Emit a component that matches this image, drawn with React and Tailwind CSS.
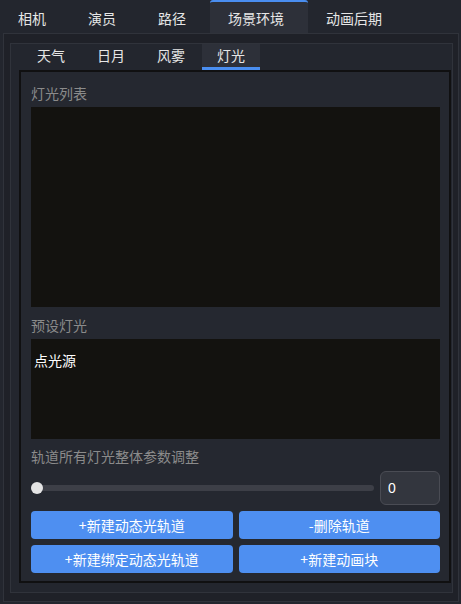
import React, { useState } from "react";

const topTabs = [
  { label: "相机", w: "w-[70px]" },
  { label: "演员", w: "w-[70px]" },
  { label: "路径", w: "w-[70px]" },
  { label: "场景环境", w: "w-[98px]" },
  { label: "动画后期", w: "w-[98px]" },
];

const subTabs = ["天气", "日月", "风雾", "灯光"];

const App = () => {
  const [tab, setTab] = useState(3);
  const [subTab, setSubTab] = useState(3);
  const [value, setValue] = useState(0);

  return (
    <div className="w-[461px] h-[604px] bg-[#23262e] text-[14px] font-['Noto_Sans_CJK_SC',sans-serif] text-[#e6e6e6] flex flex-col overflow-hidden">
      {/* 顶部标签 */}
      <div className="flex h-[33px] shrink-0">
        {topTabs.map((t, i) => (
          <button
            key={t.label}
            onClick={() => setTab(i)}
            className={`${t.w} h-[33px] pl-[18px] text-left leading-[33px] border-t-2 ${
              tab === i
                ? "bg-[#2d3039] border-[#4a8ef0] rounded-t-[3px]"
                : "border-transparent"
            }`}
          >
            {t.label}
          </button>
        ))}
      </div>

      {/* 外层面板 */}
      <div className="flex-1 ml-[3px] mr-[2px] mb-[2px] border border-[#30333b] bg-[#1f2128] pt-[9px] pl-[6px] pr-[5px] pb-[8px] flex flex-col">
        {/* 内层面板 */}
        <div className="flex-1 border border-[#30333b] bg-[#23262e] pl-[8px] pr-0 flex flex-col">
          {/* 子标签 */}
          <div className="flex h-[26px] gap-[2px] pl-[3px] shrink-0">
            {subTabs.map((s, i) => (
              <button
                key={s}
                onClick={() => setSubTab(i)}
                className={`w-[58px] h-[26px] text-center leading-[23px] border-b-[3px] ${
                  subTab === i
                    ? "bg-[#2d3039] border-[#4a8ef0]"
                    : "border-transparent"
                }`}
              >
                {s}
              </button>
            ))}
          </div>

          {/* 灯光内容 */}
          <div className="w-[432px] border-2 border-[#101011] bg-[#252830] px-[10px] pt-[11px] pb-[8px] flex flex-col">
            <div className="h-[20px] leading-[20px] text-[#8b8b8b]">灯光列表</div>
            <div className="mt-[4px] h-[200px] w-[409px] bg-[#13120f]"></div>

            <div className="mt-[8px] h-[20px] leading-[20px] text-[#8b8b8b]">预设灯光</div>
            <div className="mt-[4px] h-[100px] w-[409px] bg-[#13120f] pt-[11px] pl-[3px]">
              <div className="leading-[20px] text-white">点光源</div>
            </div>

            <div className="mt-[7px] h-[20px] leading-[20px] text-[#8b8b8b]">
              轨道所有灯光整体参数调整
            </div>

            {/* 滑块 */}
            <div className="mt-[5px] flex items-center gap-[6px] w-[409px]">
              <div className="relative flex-1 h-[34px] flex items-center">
                <div className="w-full h-[6px] rounded-full bg-[#3d3f47]"></div>
                <div className="absolute left-0 top-[11px] w-[12px] h-[12px] rounded-full bg-[#e4e4e4]"></div>
              </div>
              <input
                type="text"
                value={value}
                onChange={(e) => setValue(e.target.value)}
                className="w-[60px] h-[34px] rounded-[6px] border border-[#4a4c54] bg-[#33363e] pl-[7px] text-[14px] text-white outline-none font-['Liberation_Sans',sans-serif]"
              />
            </div>

            {/* 按钮 */}
            <div className="mt-[6px] grid grid-cols-2 gap-[6px] w-[409px]">
              <button className="h-[28px] rounded-[4px] bg-[#4e8ff1] text-white">+新建动态光轨道</button>
              <button className="h-[28px] rounded-[4px] bg-[#4e8ff1] text-white">-删除轨道</button>
              <button className="h-[28px] rounded-[4px] bg-[#4e8ff1] text-white">+新建绑定动态光轨道</button>
              <button className="h-[28px] rounded-[4px] bg-[#4e8ff1] text-white">+新建动画块</button>
            </div>
          </div>
        </div>
      </div>
    </div>
  );
};

export default App;
